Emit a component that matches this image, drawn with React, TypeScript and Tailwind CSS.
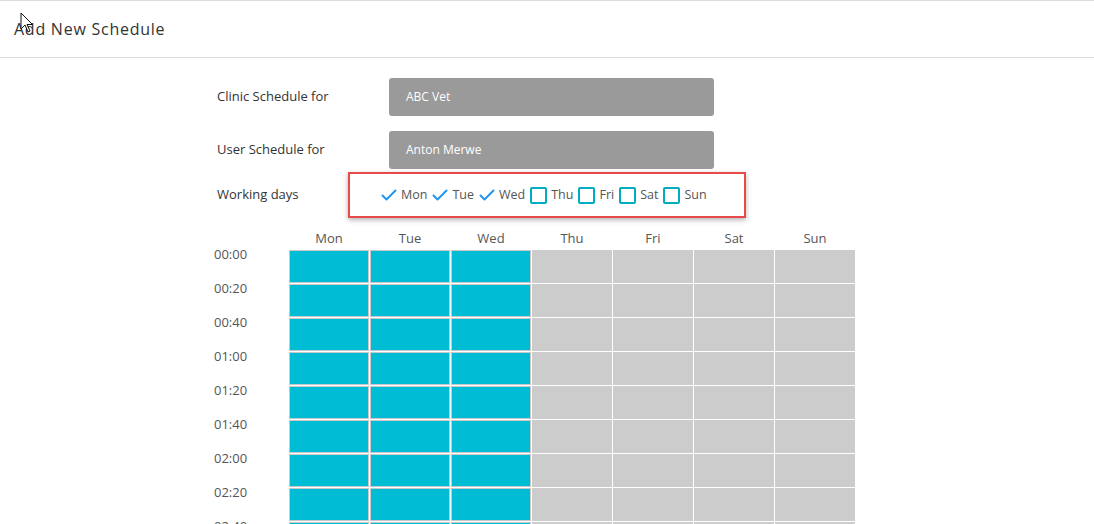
import React from 'react';

const days = ['Mon', 'Tue', 'Wed', 'Thu', 'Fri', 'Sat', 'Sun'];
const workingDays = ['Mon', 'Tue', 'Wed'];
const times = ['00:00', '00:20', '00:40', '01:00', '01:20', '01:40', '02:00', '02:20', '02:40', '03:00', '03:20'];

const CheckMark = () => (
  <svg width="16" height="16" viewBox="0 0 16 16" className="shrink-0">
    <path d="M1.5 8.5 L5.5 12.5 L14.5 3.5" fill="none" stroke="#2196f3" strokeWidth="2" strokeLinecap="round" strokeLinejoin="round" />
  </svg>
);

const EmptyBox = () => <span className="w-[17px] h-[17px] shrink-0 rounded-[2px] border-2 border-[#00acc1] bg-white" />;

const Cursor = () => (
  <svg width="14" height="22" viewBox="0 0 14 22" className="absolute left-[20px] top-[12px]">
    <path d="M1 1 L1 17 L5 13 L8 20 L10 19 L7 12.5 L12.5 12.5 Z" fill="#fff" stroke="#111" strokeWidth="1" strokeLinejoin="round" />
  </svg>
);

export default function App() {
  return (
    <div className="relative min-h-screen bg-white text-[#333]" style={{ fontFamily: '"Open Sans", "Noto Sans", sans-serif' }}>
      {/* header */}
      <div className="h-[58px] border-t border-b border-[#dddddd] flex items-center pl-[14px]">
        <h1 className="text-[16px] tracking-[0.75px] text-[#333] font-normal">Add New Schedule</h1>
      </div>
      <Cursor />

      <div className="pl-[217px] pt-[20px]">
        <div className="flex items-center h-[38px]">
          <span className="w-[172px] text-[13px]">Clinic Schedule for</span>
          <div className="w-[325px] h-[38px] rounded-[3px] bg-[#9a9a9a] flex items-center pl-[17px] text-[12px] text-white">ABC Vet</div>
        </div>
        <div className="flex items-center h-[38px] mt-[15px]">
          <span className="w-[172px] text-[13px]">User Schedule for</span>
          <div className="w-[325px] h-[38px] rounded-[3px] bg-[#9a9a9a] flex items-center pl-[17px] text-[12px] text-white">Anton Merwe</div>
        </div>
        <div className="flex items-center mt-[3px]">
          <span className="w-[131px] text-[13px]">Working days</span>
          <div className="w-[398px] h-[46px] border-2 border-[#e84a4a] shadow-[0_2px_5px_rgba(0,0,0,0.3)] flex items-center pl-[31px] gap-[5px] text-[12.5px] text-[#555]">
            {days.map(d => (
              <label key={d} className="flex items-center gap-[4px]">
                {workingDays.includes(d) ? <CheckMark /> : <EmptyBox />}
                <span>{d}</span>
              </label>
            ))}
          </div>
        </div>
      </div>

      <div className="pl-[214px] mt-[8px]">
        <div className="flex h-[24px] items-center pt-[2px]">
          <div className="w-[75px]" />
          <div className="grid grid-cols-[repeat(7,80px)] gap-x-px text-[13px] text-[#555]">
            {days.map(d => (
              <div key={d} className="text-center">{d}</div>
            ))}
          </div>
        </div>
        <div className="flex flex-col gap-y-px">
          {times.map(t => (
            <div key={t} className="flex h-[33px]">
              <div className="w-[75px] text-[13px] text-[#555] leading-none -mt-[2px]">{t}</div>
              <div className="grid grid-cols-[repeat(7,80px)] gap-x-px">
                {days.map(d =>
                  workingDays.includes(d) ? (
                    <div key={d} className="bg-[#00bcd4] border border-[#c8c8c8]" />
                  ) : (
                    <div key={d} className="bg-[#cccccc]" />
                  )
                )}
              </div>
            </div>
          ))}
        </div>
      </div>
    </div>
  );
}
